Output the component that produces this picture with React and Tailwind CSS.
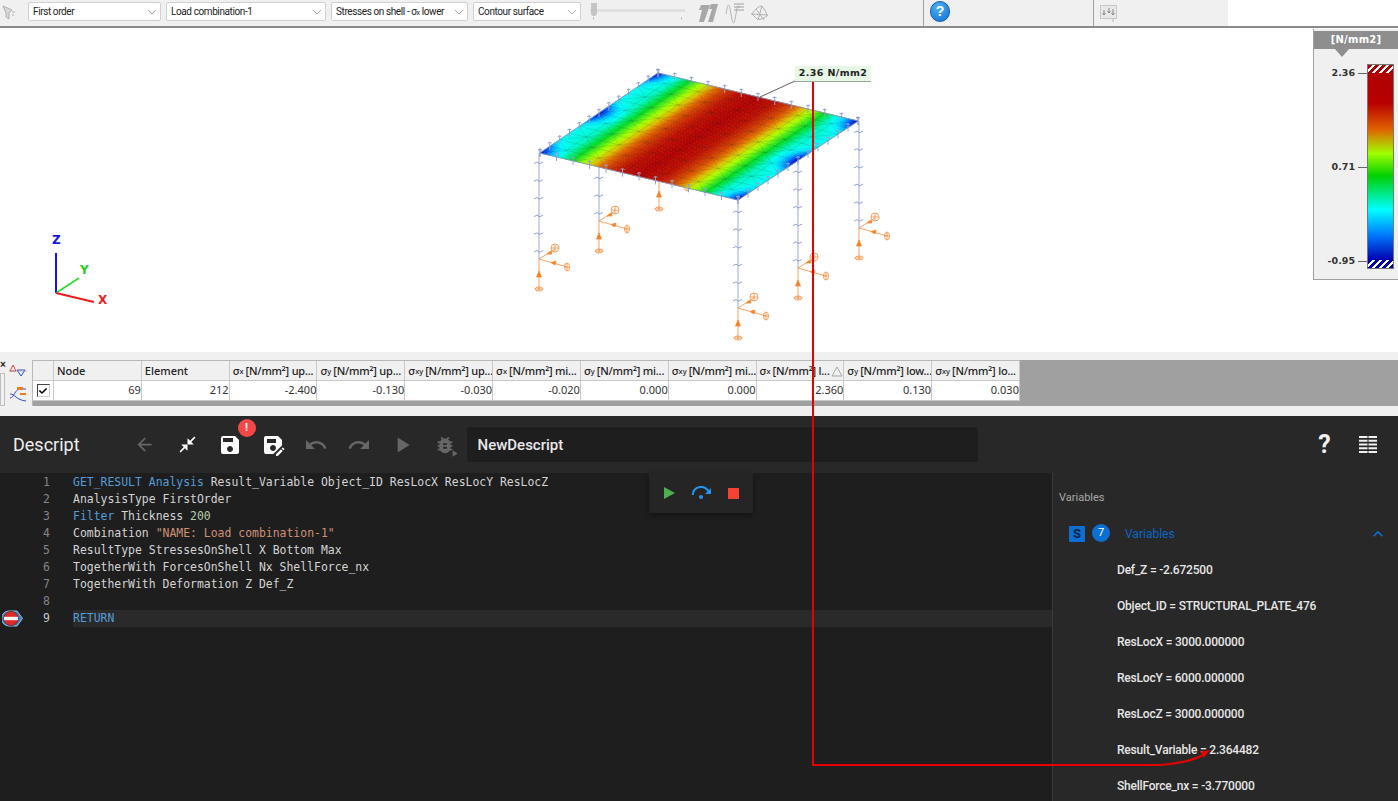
import {
  MdArrowBack,
  MdCloseFullscreen,
  MdSave,
  MdSaveAs,
  MdUndo,
  MdRedo,
  MdPlayArrow,
  MdBugReport,
  MdKeyboardArrowUp,
} from 'react-icons/md';
import { FaCheck } from 'react-icons/fa';

// plate corners in page coordinates
const A = [540, 152];
const B = [738, 199];
const C = [858, 120];
const D = [658, 72];

function plate(u, v) {
  const x = (1 - u) * (1 - v) * A[0] + u * (1 - v) * B[0] + u * v * C[0] + (1 - u) * v * D[0];
  const y = (1 - u) * (1 - v) * A[1] + u * (1 - v) * B[1] + u * v * C[1] + (1 - u) * v * D[1];
  return [x, y];
}

const STOPS = [
  [0, [0, 0, 192]],
  [0.12, [0, 96, 255]],
  [0.25, [0, 255, 255]],
  [0.4, [0, 220, 40]],
  [0.54, [170, 255, 0]],
  [0.63, [220, 200, 0]],
  [0.74, [222, 100, 0]],
  [0.9, [190, 16, 0]],
  [1, [176, 0, 0]],
];

function lerpTable(table, t) {
  for (let i = 1; i < table.length; i++) {
    if (t <= table[i][0]) {
      const [t0, a] = table[i - 1];
      const [t1, b] = table[i];
      const k = (t - t0) / (t1 - t0);
      if (Array.isArray(a)) return a.map((c, n) => Math.round(c + (b[n] - c) * k));
      return a + (b - a) * k;
    }
  }
  return table[table.length - 1][1];
}

const FIELD = [
  [0, 1],
  [0.15, 0.93],
  [0.3, 0.83],
  [0.4, 0.73],
  [0.5, 0.6],
  [0.63, 0.45],
  [0.8, 0.29],
  [1, 0.25],
];

function stressColor(u, v) {
  const d = Math.abs(u - 0.5) * 2;
  let t = lerpTable(FIELD, d);
  const spot = Math.pow(Math.abs(Math.cos(2 * Math.PI * v)), 5) * Math.pow(d, 10);
  t = Math.max(0, t - 0.25 * spot);
  const [r, g, b] = lerpTable(STOPS, Math.max(t, 0.001));
  return `rgb(${r},${g},${b})`;
}

function buildQuads() {
  const out = [];
  const nu = 66;
  const nv = 42;
  for (let i = 0; i < nu; i++) {
    for (let j = 0; j < nv; j++) {
      const p = [
        plate(i / nu, j / nv),
        plate((i + 1) / nu, j / nv),
        plate((i + 1) / nu, (j + 1) / nv),
        plate(i / nu, (j + 1) / nv),
      ];
      const c = stressColor((i + 0.5) / nu, (j + 0.5) / nv);
      out.push(
        <polygon
          key={`${i}-${j}`}
          points={p.map((q) => q.join(',')).join(' ')}
          fill={c}
          stroke={c}
          strokeWidth="0.6"
        />
      );
    }
  }
  return out;
}

function buildMesh() {
  const n = 12;
  let d = '';
  const M = (p) => `M${p[0].toFixed(1)} ${p[1].toFixed(1)}`;
  const L = (p) => `L${p[0].toFixed(1)} ${p[1].toFixed(1)}`;
  for (let i = 0; i <= n; i++) {
    d += M(plate(i / n, 0)) + L(plate(i / n, 1));
    d += M(plate(0, i / n)) + L(plate(1, i / n));
  }
  for (let i = 0; i < n; i++) {
    for (let j = 0; j < n; j++) {
      if ((i + j) % 2 === 0) d += M(plate(i / n, j / n)) + L(plate((i + 1) / n, (j + 1) / n));
      else d += M(plate((i + 1) / n, j / n)) + L(plate(i / n, (j + 1) / n));
    }
  }
  return d;
}

function buildEdgeTicks() {
  const n = 12;
  const pts = [];
  for (let i = 0; i <= n; i++) {
    pts.push(plate(i / n, 0), plate(i / n, 1), plate(0, i / n), plate(1, i / n));
  }
  return pts
    .map(([x, y]) => `M${x.toFixed(1)} ${(y - 4).toFixed(1)}v8M${(x - 2).toFixed(1)} ${(y - 3).toFixed(1)}l2 -1l2 1`)
    .join('');
}

const COLUMNS = [
  { x: 539, top: 152, bot: 258 },
  { x: 599, top: 166, bot: 220 },
  { x: 738, top: 199, bot: 307 },
  { x: 798, top: 160, bot: 267 },
  { x: 859, top: 120, bot: 227 },
];

function Column({ x, top, bot }) {
  const marks = [];
  for (let y = bot - 8; y > top + 3; y -= 17.7) {
    marks.push(`M${x - 5} ${y + 1}l3 -1.5l2 1.5l1 0l3 -1.5`);
  }
  return (
    <g fill="none" stroke="#a9b8de">
      <path d={`M${x} ${top}V${bot}`} strokeWidth="1.2" />
      <path d={marks.join('')} strokeWidth="1" stroke="#8fa3cf" />
    </g>
  );
}

function Support({ x, y }) {
  return (
    <g stroke="#f58a3c" fill="none" strokeWidth="0.8">
      <path d={`M${x} ${y}v30M${x} ${y}l28 8M${x} ${y}l16 -10`} />
      <path d={`M${x} ${y + 12}l-2.5 6h5z`} fill="#f5801e" />
      <path d={`M${x + 12} ${y + 3.5}l5 -1.5l-1 4z`} fill="#f5801e" />
      <path d={`M${x + 8} ${y - 5}l4 -3l1 3z`} fill="#f5801e" />
      <ellipse cx={x} cy={y + 30} rx="4" ry="2" />
      <path d={`M${x - 4} ${y + 30}h8M${x} ${y + 28}v4`} />
      <ellipse cx={x + 28} cy={y + 8} rx="2.5" ry="4" />
      <path d={`M${x + 25.5} ${y + 8}h5M${x + 28} ${y + 4}v8`} />
      <circle cx={x + 16} cy={y - 11} r="4" />
      <path d={`M${x + 12} ${y - 11}h8M${x + 16} ${y - 15}v8`} />
    </g>
  );
}

function ModelView() {
  return (
    <svg className="absolute left-0 top-0" width="1398" height="325" viewBox="0 27 1398 325">
      {/* global axes */}
      <g strokeWidth="2" fill="none">
        <path d="M56 292V252" stroke="#1414e6" />
        <path d="M56 292L79 277" stroke="#22dd22" strokeWidth="1.5" />
        <path d="M56 292L94 301" stroke="#ee1c1c" />
      </g>
      <g fontFamily="'DejaVu Sans', sans-serif" fontWeight="700" fontSize="12">
        <text x="52" y="243" fill="#1414e6">Z</text>
        <text x="80" y="273" fill="#22cc22">Y</text>
        <text x="98" y="303" fill="#ee1c1c">X</text>
      </g>

      {/* back column is hidden behind the plate */}
      <Support x={659} y={178} />
      <g>
        {COLUMNS.map((c) => (
          <Column key={c.x} {...c} />
        ))}
        {COLUMNS.map((c) => (
          <Support key={c.x} x={c.x} y={c.bot} />
        ))}
      </g>

      {buildQuads()}
      <path d={buildMesh()} fill="none" stroke="#1e2a2a" strokeOpacity="0.24" strokeWidth="0.5" />
      <path d={buildEdgeTicks()} fill="none" stroke="#8fa3cf" strokeWidth="1" />
      <path d={`M${A} L${B} L${C} L${D} Z`} fill="none" stroke="#8b97bd" strokeWidth="0.8" />
      <path d="M795 80L760 96" stroke="#333" strokeWidth="0.8" />
    </svg>
  );
}

function Legend() {
  const rows = ['2.36', '0.71', '-0.95'];
  return (
    <div className="absolute right-0 top-[1px] h-[251px] w-[85px] border-b border-l border-[#a0a0a0] bg-[#f0f0f0] pt-[2px]">
      <div className="relative flex h-[18px] items-center justify-center bg-[#8e8e8e] pb-[2px] text-[10px] font-bold tracking-wide text-white font-['DejaVu_Sans']">
        [N/mm2]
        <span className="absolute left-[21px] top-[18px] h-0 w-0 border-x-[7px] border-t-[8px] border-x-transparent border-t-[#8e8e8e]" />
      </div>
      <div className="flex pt-[15px]">
        <div className="mt-[2px] flex h-[202px] w-[53px] flex-col justify-between">
          {rows.map((r) => (
            <div key={r} className="flex h-[14px] items-center justify-end text-[9.5px] font-bold text-[#333] font-['DejaVu_Sans']">
              <span>{r}</span>
              <span className="ml-[3px] h-px w-[9px] bg-[#666]" />
            </div>
          ))}
        </div>
        <div className="flex h-[205px] w-[27px] flex-col border border-[#777]">
          <div className="h-[8px] bg-[repeating-linear-gradient(135deg,#b00000_0,#b00000_3px,#fff_3px,#fff_5px)]" />
          <div className="flex-1 bg-[linear-gradient(180deg,#b00000_0%,#b80000_16%,#e06000_30%,#a0ff00_43%,#00d000_55%,#00ffff_73%,#0080ff_86%,#0000b0_100%)]" />
          <div className="h-[8px] bg-[repeating-linear-gradient(135deg,#0000b0_0,#0000b0_3px,#fff_3px,#fff_5px)]" />
        </div>
      </div>
    </div>
  );
}

function Combo({ width, children }) {
  return (
    <div
      className={`${width} flex h-[19px] items-center justify-between rounded-[2px] border border-[#d0d0d0] bg-white pl-[4px] pr-[3px] text-[10px] tracking-[-0.4px] text-[#222] font-['Roboto']`}
    >
      <span className="whitespace-nowrap">{children}</span>
      <svg width="10" height="6" viewBox="0 0 10 6" className="shrink-0">
        <path d="M1 1l4 4l4 -4" fill="none" stroke="#a8a8a8" />
      </svg>
    </div>
  );
}

function TopBar() {
  return (
    <div className="flex h-[28px] w-full shrink-0 border-b-2 border-[#8a8a8a] bg-white">
      <div className="flex w-[1228px] bg-[#f0f0f0]">
        <div className="flex w-[924px] items-start gap-[5px] border-r border-[#a0a0a0] pt-[2px]">
          <svg width="28" height="20" viewBox="0 0 28 20" className="-mr-[5px] shrink-0" fill="none" stroke="#b0b0b0">
            <path d="M3 4l9 4l-3 3v6l-3 -2v-4z" fill="#d8d8d8" />
            <path d="M12 10h3M12 13h2" />
          </svg>
          <Combo width="w-[133px]">First order</Combo>
          <Combo width="w-[160px]">Load combination-1</Combo>
          <Combo width="w-[137px]">
            Stresses on shell - σ<span className="text-[7px]">x</span> lower
          </Combo>
          <Combo width="w-[108px]">Contour surface</Combo>
          <div className="relative ml-[4px] mt-[1px] h-[17px] w-[95px] shrink-0">
            <div className="mt-[6px] h-[3px] w-full bg-[#e0e0e0]" />
            <span className="absolute left-[1px] top-0 h-[13px] w-[6px] rounded-b-[3px] bg-[#c4c4c4]" />
            <span className="absolute bottom-0 left-[3px] h-[3px] w-px bg-[#c4c4c4]" />
            <span className="absolute bottom-0 right-[3px] h-[3px] w-px bg-[#c4c4c4]" />
          </div>
          <svg width="78" height="22" viewBox="0 0 78 22" className="ml-[6px] shrink-0" fill="none">
            <path d="M5 3h9l-6 17h-5l3 -12h-3zM15 2h7l-5 18h-5l4 -13h-3z" fill="#a8a8a8" />
            <path d="M30 12c2 -12 3 -12 5 0s3 12 5 0s2 -8 4 -6" stroke="#b4b4b4" />
            <path d="M38 2h10M38 5h10M38 8h10" stroke="#a0a0a0" />
            <path d="M56 12c3 -5 7 -8 10 -8c3 4 5 8 5 10c-4 3 -8 4 -10 3zM60 7l8 11M66 4l-4 14M55 12l17 1" stroke="#b0b0b0" />
          </svg>
        </div>
        <div className="flex w-[170px] items-start border-r border-[#a0a0a0] pl-[6px] pt-[1px]">
          <div className="flex h-[21px] w-[20px] items-center justify-center rounded-full border border-[#0f5fb5] bg-[radial-gradient(circle_at_40%_30%,#4fb0f5,#0f6fd0)] text-[14px] font-bold text-white font-['Liberation_Sans']">
            ?
          </div>
        </div>
        <div className="flex w-[134px] items-center pl-[6px]">
          <svg width="18" height="20" viewBox="0 0 18 20" fill="none">
            <rect x="0.5" y="2.5" width="16" height="13" fill="#e8e8e8" stroke="#c8c8c8" />
            <path d="M4 7v5M9 5v5M13 6v6" stroke="#888" />
            <path d="M2.5 10l1.5 2l1.5 -2M7.5 8l1.5 2l1.5 -2M11.5 10l1.5 2l1.5 -2" stroke="#888" />
            <path d="M13 15v4" stroke="#bbb" />
          </svg>
        </div>
      </div>
    </div>
  );
}

const HEADERS = [
  { s: 'x', r: '[N/mm²] up...' },
  { s: 'y', r: '[N/mm²] up...' },
  { s: 'xy', r: '[N/mm²] up...' },
  { s: 'x', r: '[N/mm²] mi...' },
  { s: 'y', r: '[N/mm²] mi...' },
  { s: 'xy', r: '[N/mm²] mi...' },
  { s: 'x', r: '[N/mm²] l...', sort: true },
  { s: 'y', r: '[N/mm²] low...' },
  { s: 'xy', r: '[N/mm²] lo...' },
];
const VALUES = ['69', '212', '-2.400', '-0.130', '-0.030', '-0.020', '0.000', '0.000', '2.360', '0.130', '0.030'];

function ResultTable() {
  const headCell = 'flex h-[20px] items-center border-r border-b border-[#c8c8c8] bg-[#f0f0f0] pl-[3px] pt-[1px] whitespace-nowrap overflow-hidden';
  return (
    <div className="flex h-[46px] shrink-0 bg-[#a0a0a0]">
      <div className="relative flex w-[32px] shrink-0 flex-col items-end gap-[8px] bg-[#f0f0f0] pr-[5px] pt-[2px]">
        <span className="absolute left-[0px] top-0 text-[10px] font-bold leading-[10px] text-[#222] font-['Liberation_Sans']">×</span>
        <span className="absolute bottom-0 left-0 h-[33px] w-[5px] border border-[#c0c0c0]" />
        <svg width="18" height="16" viewBox="0 0 18 16" fill="none">
          <path d="M1 9l3 -6l3 6z" stroke="#e04040" />
          <path d="M8 8h8l-4 6z" stroke="#3050d0" />
          <path d="M0 9h18" stroke="#999" strokeWidth="0.6" />
        </svg>
        <svg width="18" height="17" viewBox="0 0 18 17" fill="none">
          <path d="M1 12c4 0 5 -9 10 -9h6" stroke="#3050d0" />
          <path d="M1 8c5 0 6 6 16 7" stroke="#3050d0" />
          <rect x="8" y="1" width="6" height="3" fill="#ee7a20" />
          <rect x="11" y="7" width="6" height="2" fill="#ee7a20" />
        </svg>
      </div>
      <div className="h-[46px] border-l border-t border-[#b8b8b8]">
        <div className="grid grid-cols-[21px_repeat(11,87.82px)] text-[11px] text-[#222] font-['Noto_Sans']">
          <div className={headCell} />
          <div className={`${headCell} font-medium`}>Node</div>
          <div className={`${headCell} font-medium`}>Element</div>
          {HEADERS.map((h, i) => (
            <div key={i} className={`${headCell} font-medium`}>
              <span>σ</span>
              <span className="text-[7.5px] mt-[2px]">{h.s}</span>
              <span className="ml-[2px] tracking-[-0.2px]">{h.r}</span>
              {h.sort && (
                <svg width="12" height="11" viewBox="0 0 12 11" className="ml-[1px] shrink-0" fill="none">
                  <path d="M6 1l5 9h-10z" stroke="#a8a8a8" />
                </svg>
              )}
            </div>
          ))}
          <div className="flex h-[20px] items-center justify-center border-r border-b border-[#c8c8c8] bg-white">
            <span className="flex h-[13px] w-[13px] items-center justify-center border border-[#444] border-b-[#ccc] border-r-[#ccc] bg-white">
              <FaCheck className="h-[8px] w-[8px] text-black" />
            </span>
          </div>
          {VALUES.map((v, i) => (
            <div key={i} className="flex h-[20px] items-center justify-end border-r border-b border-[#c8c8c8] bg-white text-[#333]">
              {v}
            </div>
          ))}
        </div>
      </div>
    </div>
  );
}

function HeadIcon({ children, className = 'text-[#666]' }) {
  return <div className={`relative flex h-[43px] w-[43px] shrink-0 items-center justify-center ${className}`}>{children}</div>;
}

function Header() {
  return (
    <div className="flex h-[57px] shrink-0 items-center bg-[#282828] pl-[13px] pr-[9px]">
      <div className="w-[109.5px] shrink-0 text-[18px] text-[#eeeeee] font-['Roboto']">Descript</div>
      <HeadIcon><MdArrowBack size={21} /></HeadIcon>
      <HeadIcon className="text-white"><MdCloseFullscreen size={19} /></HeadIcon>
      <HeadIcon className="text-white">
        <MdSave size={24} />
        <span className="absolute -top-[4px] left-[29px] flex h-[18px] w-[18px] items-center justify-center rounded-full bg-[#f44848] text-[11px] font-bold text-white font-['Roboto']">!</span>
      </HeadIcon>
      <HeadIcon className="text-white"><MdSaveAs size={24} /></HeadIcon>
      <HeadIcon><MdUndo size={24} /></HeadIcon>
      <HeadIcon><MdRedo size={24} /></HeadIcon>
      <HeadIcon><MdPlayArrow size={26} /></HeadIcon>
      <HeadIcon>
        <MdBugReport size={22} />
        <MdPlayArrow size={11} className="absolute left-[25px] top-[25px]" />
      </HeadIcon>
      <div className="flex h-[35px] w-[511px] shrink-0 items-center rounded-[3px] bg-[#1e1e1e] pl-[11px] pt-[2px] text-[15px] font-medium text-[#e8e8e8] font-['Roboto']">
        NewDescript
      </div>
      <div className="ml-auto flex">
        <HeadIcon className="text-[#f0f0f0]">
          <span className="text-[25px] font-bold font-['Roboto']">?</span>
        </HeadIcon>
        <HeadIcon className="text-[#f0f0f0]">
          <svg width="18" height="17" viewBox="0 0 18 17" fill="currentColor">
            <path d="M0 0h8.5v2H0zM9.5 0H18v2H9.5zM0 3.75h8.5v2H0zM9.5 3.75H18v2H9.5zM0 7.5h8.5v2H0zM9.5 7.5H18v2H9.5zM0 11.25h8.5v2H0zM9.5 11.25H18v2H9.5zM0 15h8.5v2H0zM9.5 15H18v2H9.5z" />
          </svg>
        </HeadIcon>
      </div>
    </div>
  );
}

const W = 'text-[#d4d4d4]';
const K = 'text-[#569cd6]';
const CODE = [
  [[K, 'GET_RESULT Analysis '], [W, 'Result_Variable Object_ID ResLocX ResLocY ResLocZ']],
  [[W, 'AnalysisType FirstOrder']],
  [[K, 'Filter '], [W, 'Thickness '], ['text-[#b5cea8]', '200']],
  [[W, 'Combination '], ['text-[#ce9178]', '"NAME: Load combination-1"']],
  [[W, 'ResultType StressesOnShell X Bottom Max']],
  [[W, 'TogetherWith ForcesOnShell Nx ShellForce_nx']],
  [[W, 'TogetherWith Deformation Z Def_Z']],
  [],
  [[K, 'RETURN']],
];

function BreakMark() {
  return (
    <svg width="21" height="17" viewBox="0 0 21 17">
      <path d="M7 1h8l5.5 7.5l-5.5 7.5H7a7.5 7.5 0 0 1 0 -15z" fill="#3f7fb8" stroke="#9cc4e4" />
      <circle cx="9" cy="8.5" r="7.2" fill="#e02828" stroke="#3a2020" strokeWidth="0.6" />
      <rect x="2" y="6.8" width="14" height="3.4" fill="#f4f4f4" />
    </svg>
  );
}

function Editor() {
  return (
    <div className="relative min-w-0 flex-1 bg-[#1e1e1e] pt-[1px] text-[11.45px] font-['DejaVu_Sans_Mono']">
      {CODE.map((tokens, i) => (
        <div key={i} className="flex h-[17px] items-center">
          <div className="flex w-[24px] shrink-0 items-center pl-[2px]">{i === 8 && <BreakMark />}</div>
          <div className={`w-[26px] shrink-0 text-right ${i === 8 ? 'text-[#c6c6c6]' : 'text-[#858585]'}`}>{i + 1}</div>
          <div className={`ml-[23px] h-[17px] flex-1 whitespace-pre leading-[17px] ${i === 8 ? 'bg-[#2a2a2a]' : ''}`}>
            {tokens.map(([cls, text], n) => (
              <span key={n} className={cls}>{text}</span>
            ))}
          </div>
        </div>
      ))}
      <div className="absolute left-[649px] top-0 flex h-[40px] w-[104px] items-center justify-between bg-[#252526] pl-[13px] pr-[14px] shadow-[0_2px_6px_rgba(0,0,0,0.4)]">
        <svg width="14" height="14" viewBox="0 0 14 14"><path d="M2 1l11 6l-11 6z" fill="#4caf50" /></svg>
        <svg width="22" height="14" viewBox="0 0 22 14" fill="none">
          <path d="M2 9a8 7 0 0 1 16 -2" stroke="#2196f3" strokeWidth="2" />
          <path d="M14 8h6v-6z" fill="#2196f3" />
          <circle cx="10" cy="11" r="2" fill="#2196f3" />
        </svg>
        <span className="h-[11px] w-[11px] bg-[#f44336]" />
      </div>
    </div>
  );
}

const VARS = [
  'Def_Z = -2.672500',
  'Object_ID = STRUCTURAL_PLATE_476',
  'ResLocX = 3000.000000',
  'ResLocY = 6000.000000',
  'ResLocZ = 3000.000000',
  'Result_Variable = 2.364482',
  'ShellForce_nx = -3.770000',
];

function VariablesPanel() {
  return (
    <div className="w-[346px] shrink-0 overflow-hidden border-l border-[#3a3a3a] bg-[#282828] font-['Roboto']">
      <div className="pl-[6px] pt-[17px] text-[11px] leading-[16px] text-[#a8a8a8]">Variables</div>
      <div className="mt-[16px] flex h-[24px] items-center pl-[16px] pr-[10px]">
        <span className="flex h-[16px] w-[16px] items-center justify-center rounded-[1px] bg-[#0b6fd4] text-[13px] font-bold text-[#10243a]">S</span>
        <span className="ml-[7px] flex h-[18px] w-[18px] -translate-y-[1px] items-center justify-center rounded-full bg-[#0b6fd4] text-[11px] text-white">7</span>
        <span className="ml-[15px] text-[12px] text-[#0b66c4]">Variables</span>
        <MdKeyboardArrowUp size={20} className="ml-auto text-[#0b6fd4]" />
      </div>
      <div className="mt-[6px] pl-[64px]">
        {VARS.map((v) => (
          <div key={v} className="flex h-[36px] items-center whitespace-nowrap text-[12px] font-medium tracking-[-0.2px] text-[#e6e6e6]">{v}</div>
        ))}
      </div>
    </div>
  );
}

export default function App() {
  return (
    <div className="relative flex h-[801px] w-[1398px] flex-col overflow-hidden bg-white">
      <TopBar />
      <div className="relative h-[324px] shrink-0 bg-white">
        <ModelView />
        <div className="absolute left-[795px] top-[38px] flex h-[16px] w-[76px] items-center justify-center border-b border-[#9aa89a] bg-[#e6f7e6] text-[9.5px] font-bold tracking-[0.4px] text-[#222] font-['DejaVu_Sans']">
          2.36 N/mm2
        </div>
        <Legend />
      </div>
      <div className="h-[8px] shrink-0 bg-[#f0f0f0]" />
      <ResultTable />
      <div className="h-[10px] shrink-0 bg-[#f0f0f0]" />
      <Header />
      <div className="flex min-h-0 flex-1">
        <Editor />
        <VariablesPanel />
      </div>
      {/* red annotation from the plate label down to the result value */}
      <svg className="pointer-events-none absolute left-0 top-0" width="1398" height="801" fill="none">
        <path d="M813 82V765H1160Q1188 763 1203 755" stroke="#e60000" strokeWidth="2" />
        <path d="M1210 750l-10 1.5l4 6z" fill="#e60000" />
      </svg>
    </div>
  );
}
